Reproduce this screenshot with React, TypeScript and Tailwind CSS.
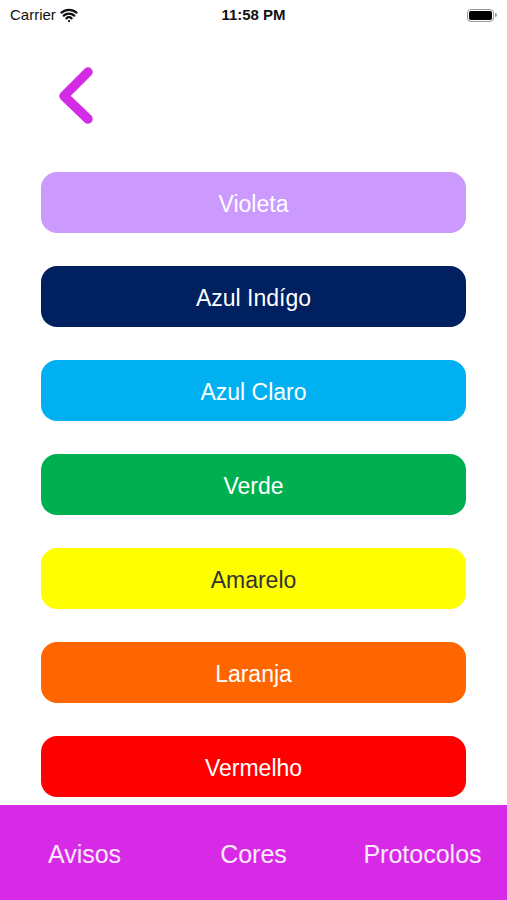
import { Wifi } from "lucide-react";

const colors = [
  { label: "Violeta", bg: "bg-[#cc99ff]", text: "text-white" },
  { label: "Azul Indígo", bg: "bg-[#002060]", text: "text-white" },
  { label: "Azul Claro", bg: "bg-[#00b0f0]", text: "text-white" },
  { label: "Verde", bg: "bg-[#00b050]", text: "text-white" },
  { label: "Amarelo", bg: "bg-[#ffff00]", text: "text-[#333333]" },
  { label: "Laranja", bg: "bg-[#ff6600]", text: "text-white" },
  { label: "Vermelho", bg: "bg-[#ff0000]", text: "text-white" },
];

export default function App() {
  return (
    <div className="flex h-[900px] w-[507px] flex-col overflow-hidden bg-white font-['Liberation_Sans',Arial,sans-serif]">
      {/* status bar */}
      <div className="flex h-[30px] items-center justify-between px-[10px] text-[15px] text-[#111]">
        <div className="flex w-[120px] items-center gap-1">
          <span>Carrier</span>
          <Wifi size={18} strokeWidth={3} />
        </div>
        <span className="font-semibold">11:58 PM</span>
        <div className="flex w-[120px] justify-end">
          <div className="flex items-center">
            <div className="h-[13px] w-[27px] rounded-[4px] border border-[#999] p-[1px]">
              <div className="h-full w-full rounded-[2px] bg-black" />
            </div>
            <div className="ml-[1px] h-[4px] w-[2px] rounded-r bg-[#999]" />
          </div>
        </div>
      </div>

      {/* back chevron */}
      <div className="pl-[56px] pt-[36px]">
        <svg width="40" height="60" viewBox="0 0 40 60">
          <path
            d="M32 6 L8 30 L32 53"
            fill="none"
            stroke="#d42ce6"
            strokeWidth="9.5"
            strokeLinecap="round"
            strokeLinejoin="round"
          />
        </svg>
      </div>

      {/* color buttons */}
      <div className="mt-[46px] flex flex-col gap-[33px] px-[41px]">
        {colors.map((c) => (
          <button
            key={c.label}
            className={`flex h-[61px] items-center justify-center rounded-[16px] pt-[3px] text-[23px] ${c.bg} ${c.text}`}
          >
            {c.label}
          </button>
        ))}
      </div>

      {/* tab bar */}
      <div className="mt-auto flex h-[95px] items-start bg-[#d62ae6] pt-[31px] text-[25px] text-white/90">
        <div className="flex w-[169px] justify-center">Avisos</div>
        <div className="flex w-[169px] justify-center">Cores</div>
        <div className="flex w-[169px] justify-center">Protocolos</div>
      </div>
    </div>
  );
}
